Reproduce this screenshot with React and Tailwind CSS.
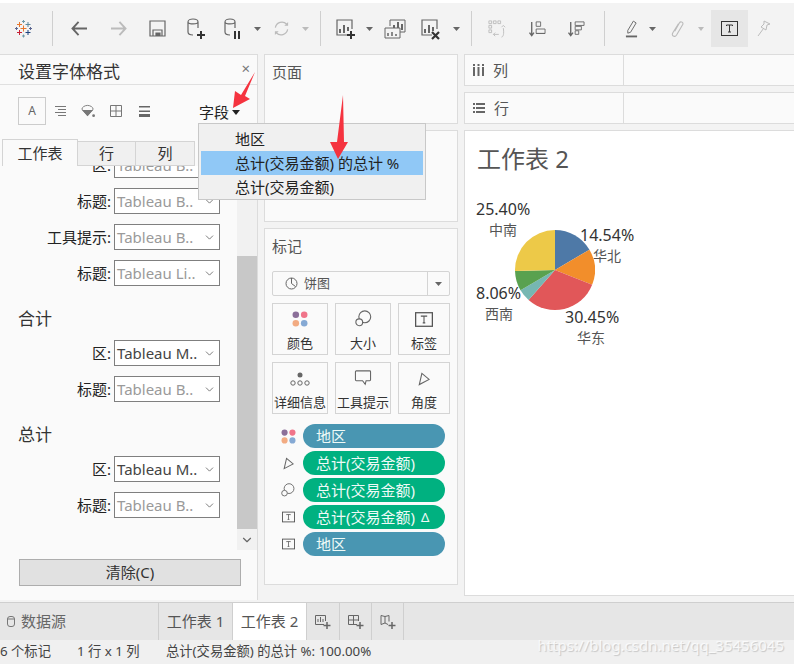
import React from 'react';
import { ChevronDown } from 'lucide-react';

const fontStack = '[font-family:"Noto_Sans","Noto_Sans_CJK_SC",sans-serif]';

// pie slices, clockwise from 12 o'clock
const slices = [
    { color: '#4e79a7', pct: 16.5 },
    { color: '#f28e2b', pct: 14.54 },
    { color: '#e15759', pct: 30.45 },
    { color: '#76b7b2', pct: 5.05 },
    { color: '#59a14f', pct: 8.06 },
    { color: '#edc948', pct: 25.4 },
];

const Pie = () => {
    let start = 0;
    const point = (p) => {
        const a = (p / 100) * Math.PI * 2;
        return `${40 + 40 * Math.sin(a)} ${40 - 40 * Math.cos(a)}`;
    };
    return (
        <svg width="80" height="80" viewBox="0 0 80 80">
            {slices.map((s) => {
                const from = point(start);
                start += s.pct;
                const to = point(start);
                return <path key={s.color} d={`M40 40L${from}A40 40 0 ${s.pct > 50 ? 1 : 0} 1 ${to}Z`} fill={s.color} />;
            })}
        </svg>
    );
};

const Caret = ({ color = '#777', w = 7, h = 4 }) => (
    <svg width={w} height={h} viewBox="0 0 9 5" preserveAspectRatio="none"><path d="M0 0h9L4.500 5z" fill={color} /></svg>
);

const Logo = () => {
    const marks = [
        [8.5, 8.5, 3, '#e8762b'], [4.5, 4.5, 2.5, '#e8762b'], [13, 4.5, 2.5, '#5b879b'],
        [8.5, 1.5, 1.5, '#7099a6'], [1.5, 8.5, 1.5, '#5b6591'], [15.5, 8.5, 1.5, '#5b6591'],
        [4.5, 12.5, 2.5, '#c72035'], [13, 12.5, 2.5, '#1f447e'], [8.5, 16, 1.5, '#7099a6'],
    ];
    return (
        <svg width="17" height="18" viewBox="0 0 17 18">
            {marks.map(([x, y, r, c], i) => (
                <path key={i} d={`M${x - r} ${y}h${r * 2}M${x} ${y - r}v${r * 2}`} stroke={c} strokeWidth="1" fill="none" />
            ))}
        </svg>
    );
};

const Cyl = ({ children }) => (
    <svg width="20" height="24" viewBox="0 0 20 24" fill="none" stroke="#666" strokeWidth="1.200">
        <path d="M2 5c0-4 10-4 10 0v6M2 5c0 2.500 10 2.500 10 0M2 5v10c0 2 2 3 5 3" />
        {children}
    </svg>
);

const Plus = ({ x, y, color = '#333' }) => (
    <path d={`M${x - 4} ${y}h8M${x} ${y - 4}v8`} stroke={color} strokeWidth="2" fill="none" />
);

const BarFrame = ({ children }) => (
    <svg width="21" height="22" viewBox="0 0 21 22" fill="none" stroke="#666" strokeWidth="1.200">
        <path d="M12 17H2V2h15v9" />
        <path d="M5 15v-4M9 15V7M13 13V9" strokeWidth="2" />
        {children}
    </svg>
);

const TIcon = ({ w = 18, h = 15, c = '#555' }) => (
    <svg width={w} height={h} viewBox="0 0 17 14" fill="none">
        <rect x=".6" y=".6" width="15.800" height="12.800" stroke={c} strokeWidth="1.200" />
        <path d="M6 4.500V3.800h5v.7M8.500 3.800v6.400M7.300 10.200h2.400" stroke={c} />
    </svg>
);

const Dots = ({ size = 16 }) => (
    <svg width={size} height={size} viewBox="0 0 21 21">
        <circle cx="5" cy="5" r="4.300" fill="#8b6f99" />
        <circle cx="16" cy="5" r="4.300" fill="#f0748a" />
        <circle cx="5" cy="16" r="4.300" fill="#f2ab82" />
        <circle cx="16" cy="16" r="4.300" fill="#85a9d4" />
    </svg>
);

const SizeIcon = ({ size = 17 }) => (
    <svg width={size} height={size} viewBox="0 0 20 20" fill="none" stroke="#666" strokeWidth="1.300">
        <circle cx="11.500" cy="8" r="7" />
        <circle cx="5" cy="14.500" r="4" fill="#fafafa" />
    </svg>
);

const AngleIcon = ({ size = 12 }) => (
    <svg width={size} height={size + 2} viewBox="0 0 14 16" fill="none" stroke="#666" strokeWidth="1.300">
        <path d="M4.500 1.500L13 8.500 1.500 14.500z" />
    </svg>
);

const TbItem = ({ w, children, className = '' }) => (
    <div className={`${w} h-full flex items-center justify-center shrink-0 ${className}`}>{children}</div>
);

const Sep = ({ w }) => (
    <TbItem w={w}><div className="w-px h-[35px] bg-[#cfcfcf]" /></TbItem>
);

const Toolbar = () => (
    <div className="h-[37px] mt-[7px] flex">
        <TbItem w="w-[46px]"><Logo /></TbItem>
        <Sep w="w-[12px]" />
        <div className="w-[2px]" />
        <TbItem w="w-[39px]">
            <svg width="17" height="15" viewBox="0 0 18 16" fill="none" stroke="#666" strokeWidth="2"><path d="M17 8H2M8 1L1.500 8 8 15" /></svg>
        </TbItem>
        <TbItem w="w-[39px]">
            <svg width="17" height="15" viewBox="0 0 18 16" fill="none" stroke="#bbb" strokeWidth="2"><path d="M1 8h15M10 1l6.500 7L10 15" /></svg>
        </TbItem>
        <TbItem w="w-[39px]">
            <svg width="17" height="17" viewBox="0 0 17 17" fill="none" stroke="#666" strokeWidth="1.200"><path d="M1 1h15v15H1z" /><path d="M4 16v-6h9v6" /><path d="M7 16v-3h4v3" fill="#666" /></svg>
        </TbItem>
        <TbItem w="w-[37px]"><Cyl><Plus x={15} y={18} /></Cyl></TbItem>
        <TbItem w="w-[38px]"><Cyl><path d="M12 14v8M16 14v8" stroke="#333" strokeWidth="2" /></Cyl></TbItem>
        <TbItem w="w-[10px]"><Caret color="#666" /></TbItem>
        <TbItem w="w-[38px]">
            <svg width="17" height="17" viewBox="0 0 18 18" fill="none" stroke="#bbb" strokeWidth="1.300"><path d="M2.500 8a7 7 0 0 1 12-3.500M15.500 10a7 7 0 0 1-12 3.500" /><path d="M16 2v4h-4zM2 16v-4h4z" fill="#bbb" stroke="none" /></svg>
        </TbItem>
        <TbItem w="w-[10px]"><Caret color="#bbb" /></TbItem>
        <Sep w="w-[20px]" />
        <TbItem w="w-[30px]"><BarFrame><Plus x={16} y={17} /></BarFrame></TbItem>
        <TbItem w="w-[18px]"><Caret color="#666" /></TbItem>
        <TbItem w="w-[34px]">
            <svg width="22" height="20" viewBox="0 0 22 20" fill="none" stroke="#666"><path d="M6 7V1h15v12h-5" /><path d="M10 11V6M14 11V3M18 11V5" strokeWidth="2" /><path d="M1 9h15v10H1z" fill="#f3f3f3" /><path d="M4 17v-3M8 17v-4M12 17v-2" strokeWidth="1.500" /></svg>
        </TbItem>
        <TbItem w="w-[36px]"><BarFrame><path d="M12 14l7 7M19 14l-7 7" stroke="#333" strokeWidth="2.200" /></BarFrame></TbItem>
        <TbItem w="w-[16px]"><Caret color="#666" /></TbItem>
        <Sep w="w-[14px]" />
        <TbItem w="w-[38px]">
            <svg width="18" height="18" viewBox="0 0 20 20" fill="none" stroke="#bbb"><path d="M1 1h3v3H1zM6 1h3v3H6zM11 1h3v3h-3zM1 6h3v3H1zM1 11h3v3H1z" /><path d="M15 19c2 0 3-4 2-10M15 8l2-2 2 2M6 16h6M8 14l-2 2 2 2" /></svg>
        </TbItem>
        <TbItem w="w-[42px]">
            <svg width="19" height="16" viewBox="0 0 19 18" fill="none" stroke="#666"><path d="M3 1v15M.5 13L3 16.500 5.500 13" strokeWidth="1.500" /><path d="M8 1h5v5H8zM8 9h10v5H8zM8 14h10" /></svg>
        </TbItem>
        <TbItem w="w-[36px]">
            <svg width="19" height="16" viewBox="0 0 19 18" fill="none" stroke="#666"><path d="M3 1v15M.5 13L3 16.500 5.500 13" strokeWidth="1.500" /><path d="M8 1h10v4H8zM8 6h7v4H8zM8 11h4v4H8z" /></svg>
        </TbItem>
        <Sep w="w-[20px]" />
        <TbItem w="w-[34px]">
            <svg width="13" height="18" viewBox="0 0 14 19" fill="none" stroke="#666"><path d="M9 1l3 2-6 10-3 1 0-3z" /><path d="M1 17.500h12" strokeWidth="2" /></svg>
        </TbItem>
        <TbItem w="w-[8px]"><Caret color="#666" /></TbItem>
        <TbItem w="w-[42px]">
            <svg width="13" height="17" viewBox="0 0 14 18" fill="none" stroke="#bbb" strokeWidth="1.200"><path d="M4 12l5-9c1.500-2.500 5-.5 3.500 2L6 16c-2 3-6 1-4-2.500L8 4" /></svg>
        </TbItem>
        <TbItem w="w-[6px]"><Caret color="#bbb" /></TbItem>
        <div className="w-[7px]" />
        <TbItem w="w-[37px]" className="bg-[#e6e6e6]">
            <svg width="17" height="15" viewBox="0 0 17 15" fill="none" stroke="#333"><rect x=".5" y=".5" width="16" height="14" /><path d="M5.500 5V4h6v1M8.500 4v7M7 11h3" /></svg>
        </TbItem>
        <TbItem w="w-[32px]">
            <svg width="14" height="17" viewBox="0 0 14 17" fill="none" stroke="#bbb"><path d="M7 1l6 3-3 1-1 5-5-3 3-3zM6.500 8.500L1 16" /></svg>
        </TbItem>
    </div>
);

const FontRow = ({ label, value, strong }) => (
    <div className="flex items-center justify-end h-[26px] pr-[37px]">
        <span className="text-[15px] text-[#222] mr-[3px]">{label}:</span>
        <div className="w-[106px] h-[26px] border border-[#7f7f7f] bg-white flex items-center justify-between pl-[2px] pr-[3px]">
            <span className={`text-[15px] ${strong ? 'text-[#444]' : 'text-[#9a9a9a]'}`}>{value}</span>
            <ChevronDown size={13} strokeWidth={1.400} color="#555" />
        </div>
    </div>
);

const FormatIcon = ({ children }) => (
    <div className="w-[28px] flex items-center justify-center">{children}</div>
);

const FormatPanel = () => (
    <div className="relative w-[258px] h-full flex flex-col border-t border-[#dcdcdc] border-r bg-[#fafafa]">
        <div className="h-[30px] shrink-0 border-b border-[#e0e0e0] flex items-center justify-between pl-[18px] pr-[7px]">
            <span className="text-[17px] text-[#333] leading-none mt-[3px]">设置字体格式</span>
            <span className="text-[#777] text-[15px] leading-none mb-[2px]">×</span>
        </div>
        <div className="h-[54px] shrink-0 relative flex items-start pl-[18px] pt-[12px]">
            <div className="w-[28px] h-[28px] border border-[#ccc] flex items-center justify-center text-[12px] text-[#666]">A</div>
            <div className="flex items-center h-[28px]">
                <FormatIcon>
                    <svg width="11" height="11" viewBox="0 0 11 11" fill="none" stroke="#777"><path d="M0 .5h11M3 3.500h8M0 6.500h11M3 9.500h8" /></svg>
                </FormatIcon>
                <FormatIcon>
                    <svg width="14" height="14" viewBox="0 0 15 14" fill="#777"><path d="M7 1C4 1 1 3 1 5l6 7 6-7c0-2-3-4-6-4z" fill="none" stroke="#777" /><path d="M1 6h12l-6 6.500z" /><circle cx="13.500" cy="12" r="1.500" /></svg>
                </FormatIcon>
                <FormatIcon>
                    <svg width="12" height="12" viewBox="0 0 12 12" fill="none" stroke="#777"><path d="M.5.500h11v11H.500zM6 .5v11M.5 6h11" /></svg>
                </FormatIcon>
                <FormatIcon>
                    <svg width="11" height="11" viewBox="0 0 11 11" fill="#666"><path d="M0 0h11v1.500H0zM0 4.500h11V6H0zM0 8h11v3H0z" /></svg>
                </FormatIcon>
            </div>
            <div className="ml-auto mr-[17px] mt-[4px] flex items-center gap-[3px] text-[15px] text-[#222]">
                字段 <Caret color="#222" w={8} h={5} />
            </div>
        </div>
        <div className="h-[27px] shrink-0 flex items-end pl-[2px] relative z-10">
            <div className="w-[76px] h-[27px] bg-[#fafafa] border border-b-0 border-[#d4d4d4] flex items-center justify-center text-[15px] text-[#333]">工作表</div>
            <div className="w-[58px] h-[25px] bg-[#f0f0f0] border-y border-r border-[#d4d4d4] flex items-center justify-center text-[15px] text-[#333]">行</div>
            <div className="w-[59px] h-[25px] bg-[#f0f0f0] border-y border-r border-[#d4d4d4] flex items-center justify-center text-[15px] text-[#333]">列</div>
        </div>
        <div className="relative flex-1 flex min-h-0">
            <div className="flex-1 overflow-hidden">
                <div className="mt-[-14px] flex flex-col gap-[10px]">
                    <FontRow label="区" value="Tableau B.." />
                    <FontRow label="标题" value="Tableau B.." />
                    <FontRow label="工具提示" value="Tableau B.." />
                    <FontRow label="标题" value="Tableau Li.." />
                </div>
                <div className="pl-[18px] text-[17px] text-[#333] leading-none mt-[24px] mb-[13px]">合计</div>
                <div className="flex flex-col gap-[10px]">
                    <FontRow label="区" value="Tableau M.." strong />
                    <FontRow label="标题" value="Tableau B.." />
                </div>
                <div className="pl-[18px] text-[17px] text-[#333] leading-none mt-[24px] mb-[13px]">总计</div>
                <div className="flex flex-col gap-[10px]">
                    <FontRow label="区" value="Tableau M.." strong />
                    <FontRow label="标题" value="Tableau B.." />
                </div>
            </div>
            <div className="absolute right-0 top-0 w-[20px] h-[384px] flex flex-col">
                <div className="h-[90px] bg-[#f1f1f1]" />
                <div className="h-[273px] bg-[#c8c8c8]" />
                <div className="h-[21px] bg-[#f1f1f1] flex items-center justify-center">
                    <ChevronDown size={14} strokeWidth={2} color="#666" />
                </div>
            </div>
            <button className="absolute left-[19px] bottom-[14px] w-[222px] h-[27px] bg-[#e1e1e1] border border-[#adadad] text-[15px] text-[#333] leading-none">清除(C)</button>
        </div>
    </div>
);

const Card = ({ className, title, children }) => (
    <div className={`border border-[#dcdcdc] bg-[#fafafa] ${className}`}>
        {title && <div className="text-[15px] text-[#555] pl-[7px] leading-none">{title}</div>}
        {children}
    </div>
);

const MarkBtn = ({ label, children, wide }) => (
    <div className={`${wide ? 'w-[52px]' : 'w-[56px]'} h-[52px] border border-[#d4d4d4] flex flex-col items-center`}>
        <div className="h-[23px] flex items-end">{children}</div>
        <span className="text-[13px] text-[#333] leading-none mt-[10px] whitespace-nowrap">{label}</span>
    </div>
);

const Pill = ({ icon, text, color, delta }) => (
    <div className="flex items-center h-[24px]">
        <div className="w-[30px] flex items-center justify-center">{icon}</div>
        <div className={`w-[142px] h-[24px] rounded-full ${color} text-[#eefaf7] text-[15px] leading-none flex items-center pl-[13px]`}>
            {text}
            {delta && <span className="ml-[6px] text-[13px]">Δ</span>}
        </div>
    </div>
);

const MarksCard = () => (
    <Card className="w-[194px] h-[357px] pt-[10px]" title="标记">
        <div className="mx-[7px] mt-[17px] h-[25px] border border-[#d4d4d4] rounded-[2px] flex items-center">
            <div className="flex-1 flex items-center pl-[12px] gap-[6px] text-[13px] text-[#555]">
                <svg width="13" height="13" viewBox="0 0 13 13" fill="none" stroke="#666"><circle cx="6.500" cy="6.500" r="5.500" /><path d="M6.500 1v5.500l4 3" /></svg>
                饼图
            </div>
            <div className="w-[22px] h-full border-l border-[#d4d4d4] flex items-center justify-center"><Caret color="#666" /></div>
        </div>
        <div className="mx-[7px] mt-[7px] flex gap-[7px]">
            <MarkBtn label="颜色"><Dots /></MarkBtn>
            <MarkBtn label="大小"><SizeIcon /></MarkBtn>
            <MarkBtn label="标签" wide><TIcon /></MarkBtn>
        </div>
        <div className="mx-[7px] mt-[7px] flex gap-[7px]">
            <MarkBtn label="详细信息">
                <svg width="20" height="14" viewBox="0 0 20 14" fill="none" stroke="#666"><circle cx="10" cy="3" r="2.500" fill="#666" stroke="none" /><circle cx="3" cy="11" r="2.200" /><circle cx="10" cy="11" r="2.200" /><circle cx="17" cy="11" r="2.200" /></svg>
            </MarkBtn>
            <MarkBtn label="工具提示">
                <svg width="18" height="16" viewBox="0 0 19 18" fill="none" stroke="#666" strokeWidth="1.200"><path d="M2 1h15a1 1 0 0 1 1 1v9a1 1 0 0 1-1 1h-4l-1 4-3-4H2a1 1 0 0 1-1-1V2a1 1 0 0 1 1-1z" /></svg>
            </MarkBtn>
            <MarkBtn label="角度" wide><AngleIcon /></MarkBtn>
        </div>
        <div className="mt-[10px] ml-[8px] flex flex-col gap-[3px]">
            <Pill icon={<Dots size={15} />} text="地区" color="bg-[#4996b2]" />
            <Pill icon={<AngleIcon size={11} />} text="总计(交易金额)" color="bg-[#00b180]" />
            <Pill icon={<SizeIcon size={14} />} text="总计(交易金额)" color="bg-[#00b180]" />
            <Pill icon={<TIcon w={13} h={12} />} text="总计(交易金额)" color="bg-[#00b180]" delta />
            <Pill icon={<TIcon w={13} h={12} />} text="地区" color="bg-[#4996b2]" />
        </div>
    </Card>
);

const Shelf = ({ icon, label }) => (
    <div className="h-[32px] border border-[#dcdcdc] bg-[#fafafa] flex">
        <div className="w-[159px] border-r border-[#dcdcdc] flex items-center pl-[8px] gap-[9px] text-[15px] text-[#555]">
            {icon}{label}
        </div>
    </div>
);

const ChartLabel = ({ pos, pct, name, nameClass }) => (
    <div className={`absolute ${pos} leading-none`}>
        <div className="text-[16px] text-[#333]">{pct}</div>
        <div className={`text-[14px] text-[#555] mt-[6px] ${nameClass}`}>{name}</div>
    </div>
);

const Canvas = () => (
    <div className="relative flex-1 bg-white border border-[#dcdcdc] pl-[12px] pt-[16px]">
        <div className="text-[24px] text-[#555] leading-none">工作表 2</div>
        <div className="absolute left-[50px] top-[99px]"><Pie /></div>
        <ChartLabel pos="left-[11px] top-[70px]" pct="25.40%" name="中南" nameClass="ml-[13px]" />
        <ChartLabel pos="left-[115px] top-[96px]" pct="14.54%" name="华北" nameClass="ml-[13px]" />
        <ChartLabel pos="left-[11px] top-[154px]" pct="8.06%" name="西南" nameClass="ml-[9px]" />
        <ChartLabel pos="left-[100px] top-[178px]" pct="30.45%" name="华东" nameClass="ml-[12px]" />
    </div>
);

const SheetTab = ({ active, children, w }) => (
    <div className={`${w} h-full border-r border-[#cfcfcf] flex items-center justify-center text-[15px] text-[#555] ${active ? 'bg-white' : ''}`}>{children}</div>
);

const BottomBar = () => (
    <>
        <div className="h-[38px] mt-[2px] border-t border-[#cfcfcf] bg-[#e6e6e6] flex">
            <div className="w-[159px] h-full border-r border-[#cfcfcf] flex items-center pl-[7px] gap-[6px] text-[15px] text-[#666]">
                <svg width="8" height="11" viewBox="0 0 8 11" fill="none" stroke="#777"><rect x=".5" y=".5" width="7" height="10" rx="2.500" /><path d="M.5 3h7" /></svg>
                数据源
            </div>
            <SheetTab w="w-[74px]">工作表 1</SheetTab>
            <SheetTab w="w-[74px]" active>工作表 2</SheetTab>
            <SheetTab w="w-[33px]">
                <svg width="16" height="16" viewBox="0 0 16 16" fill="none" stroke="#666"><path d="M9 10.500H.5v-9h10V7" /><path d="M3 8V5M5.500 8V3M8 8V5" /><path d="M12 8v7M8.500 11.500h7" strokeWidth="1.500" /></svg>
            </SheetTab>
            <SheetTab w="w-[32px]">
                <svg width="16" height="16" viewBox="0 0 16 16" fill="none" stroke="#666"><path d="M9 10.500H.5v-9h10V7M.5 6h10M5.500 1.500v9" /><path d="M12 8v7M8.500 11.500h7" strokeWidth="1.500" /></svg>
            </SheetTab>
            <SheetTab w="w-[32px]">
                <svg width="16" height="16" viewBox="0 0 16 16" fill="none" stroke="#666"><path d="M8 10.500l-3-1.500-4 1.500v-9l4 1 4-1v6M5 2.500V9" /><path d="M12 8v7M8.500 11.500h7" strokeWidth="1.500" /></svg>
            </SheetTab>
        </div>
        <div className="h-[24px] bg-[#f0f0f0] flex items-center text-[13.3px] text-[#444] whitespace-nowrap">
            <span className="w-[77px]">6 个标记</span>
            <span className="w-[89px]">1 行 x 1 列</span>
            <span>总计(交易金额) 的总计 %: 100.00%</span>
        </div>
    </>
);

export default function App() {
    return (
        <div className={`relative w-[794px] h-[664px] overflow-hidden bg-[#f3f3f3] ${fontStack}`}>
            <div className="h-[3px] bg-white" />
            <Toolbar />
            <div className="h-[546px] mt-[7px] flex">
                <FormatPanel />
                <div className="w-[6px]" />
                <div className="w-[194px] flex flex-col gap-[6px]">
                    <Card className="h-[70px] pt-[10px]" title="页面" />
                    <Card className="h-[92px]" />
                    <MarksCard />
                </div>
                <div className="w-[6px]" />
                <div className="flex-1 flex flex-col gap-[6px] -mr-[1px] pb-[4px]">
                    <Shelf label="列" icon={<svg width="11" height="12" viewBox="0 0 11 12" fill="#666"><path d="M0 0h2v2H0zM0 3h2v9H0zM4.500 0h2v2h-2zM4.500 3h2v9h-2zM9 0h2v2H9zM9 3h2v9H9z" /></svg>} />
                    <Shelf label="行" icon={<svg width="12" height="10" viewBox="0 0 12 10" fill="#666"><path d="M0 0h2v2H0zM3 0h9v2H3zM0 4h2v2H0zM3 4h9v2H3zM0 8h2v2H0zM3 8h9v2H3z" /></svg>} />
                    <Canvas />
                </div>
            </div>
            <BottomBar />

            {/* field dropdown */}
            <div className="absolute left-[198px] top-[123px] w-[228px] h-[77px] bg-[#f0f0f0] border border-[#c8c8c8] pt-[3px] px-[2px] text-[15px] text-[#222] leading-none z-20">
                <div className="h-[24px] pl-[34px] flex items-center">地区</div>
                <div className="h-[24px] pl-[34px] bg-[#90c8f6] flex items-center">总计(交易金额) 的总计 %</div>
                <div className="h-[24px] pl-[34px] flex items-center">总计(交易金额)</div>
            </div>

            {/* red annotation arrows */}
            <svg className="absolute left-[232px] top-[72px] z-30" width="25" height="37" viewBox="0 0 25 37" fill="#f5333f">
                <path d="M23 0L13 24l5 3L1 36 3 19l6 4z" />
            </svg>
            <svg className="absolute left-[329px] top-[95px] z-30" width="20" height="65" viewBox="0 0 20 65" fill="#f5333f">
                <path d="M14 0l1 47h4L9 64 1 47h7z" />
            </svg>

            {/* watermark */}
            <div className="absolute right-[10px] top-[638px] text-[15px] leading-none text-white/75 [text-shadow:1px_1px_1px_rgba(0,0,0,0.18)] z-30">https://blog.csdn.net/qq_35456045</div>
        </div>
    );
}
